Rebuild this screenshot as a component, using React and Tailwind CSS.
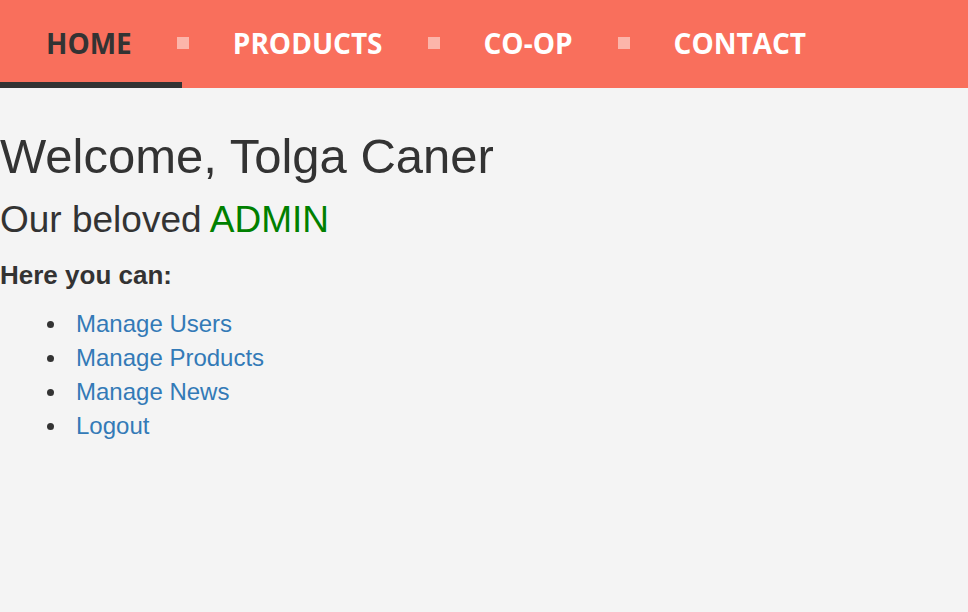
import React from "react";

const navItems = ["HOME", "PRODUCTS", "CO-OP", "CONTACT"];

const App = () => {
  return (
    <div className="min-h-screen bg-[#f4f4f4] text-[#333] font-['Liberation_Sans',Arial,sans-serif]">
      {/* Navbar */}
      <nav className="h-[88px] bg-[#f96f5c] flex items-center font-['Open_Sans',sans-serif] font-bold text-[28px] leading-none">
        {navItems.map((item, i) => (
          <React.Fragment key={item}>
            {i > 0 && <span className="w-[12px] h-[12px] bg-[#fcb5aa] ml-[45px] mr-[44px] -mt-[2px]" />}
            <a
              href="#"
              className={
                i === 0
                  ? "relative h-full flex items-center pl-[46px] pb-[2px] text-[#333]"
                  : "h-full flex items-center pb-[2px] text-white"
              }
            >
              {item}
              {i === 0 && <span className="absolute left-0 bottom-0 h-[6px] w-[182px] bg-[#333]" />}
            </a>
          </React.Fragment>
        ))}
      </nav>

      {/* Content */}
      <div className="pt-[42px]">
        <h1 className="text-[49px] leading-[1.1]">Welcome, Tolga Caner</h1>
        <h2 className="mt-[16px] text-[37px] leading-[1.1]">
          Our beloved <span className="text-[#008000]">ADMIN</span>
        </h2>
        <h3 className="mt-[20px] text-[26px] leading-[1.1] font-bold">Here you can:</h3>
        <ul className="mt-[18px] text-[24px] leading-[34px]">
          {["Manage Users", "Manage Products", "Manage News", "Logout"].map((link) => (
            <li key={link} className="flex items-center">
              <span className="ml-[47px] mr-[22px] w-[7px] h-[7px] rounded-full bg-[#333]" />
              <a href="#" className="text-[#337ab7]">{link}</a>
            </li>
          ))}
        </ul>
      </div>
    </div>
  );
};

export default App;
